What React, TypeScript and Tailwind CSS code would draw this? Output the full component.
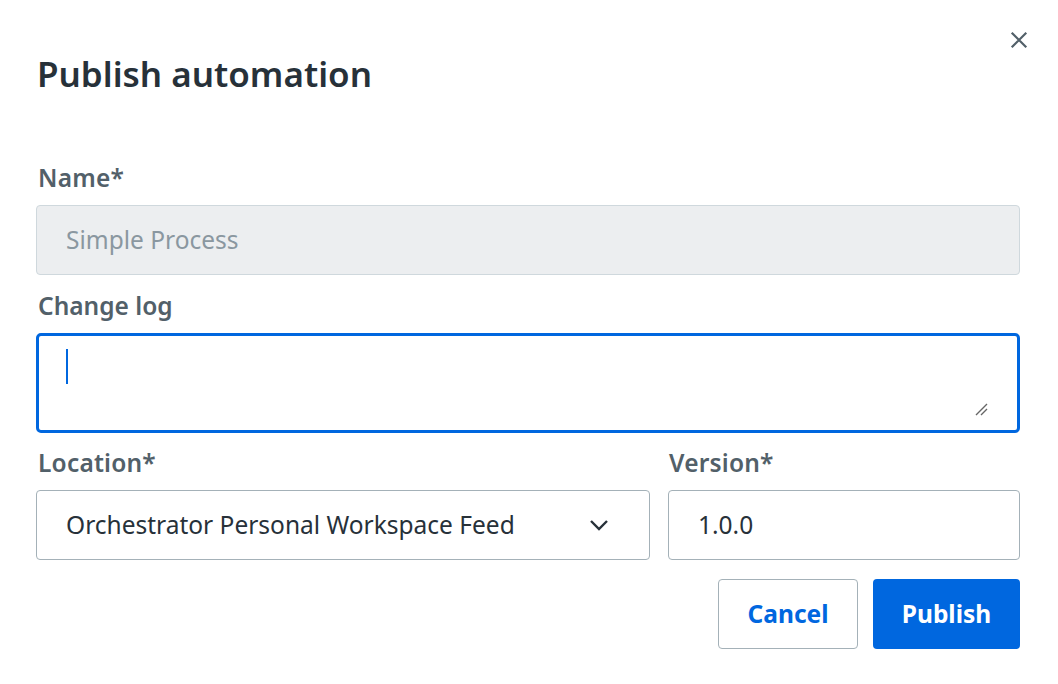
import React from "react";

export default function App() {
  return (
    <div className="w-[1058px] h-[684px] bg-white relative" style={{ fontFamily: '"Noto Sans", sans-serif' }}>
      <button className="absolute right-[29px] top-[30px] w-[20px] h-[20px] flex items-center justify-center text-[#526069]">
        <svg width="18" height="18" viewBox="0 0 18 18" fill="none">
          <path d="M2.5 2.5 L15.5 15.5 M15.5 2.5 L2.5 15.5" stroke="#526069" strokeWidth="2.2" strokeLinecap="square" />
        </svg>
      </button>
      <div className="pl-[36px] pr-[38px] pt-[52px]">
        <h1 className="text-[35px] leading-[44px] font-semibold text-[#273139] pl-[1px]">Publish automation</h1>
        <div className="mt-[66px] text-[24.5px] leading-[32px] font-semibold tracking-[0.2px] text-[#526069] pl-[2px]">Name*</div>
        <div className="mt-[11px] h-[70px] rounded-[4px] border border-[#cfd8dd] bg-[#eceef0] flex items-center px-[29px] text-[24.5px] text-[#8a97a0]">
          Simple Process
        </div>
        <div className="mt-[15px] text-[24.5px] leading-[32px] font-semibold text-[#526069] pl-[2px]">Change log</div>
        <div className="mt-[11px] h-[100px] rounded-[5px] border-[3px] border-[#0067df] relative">
          <div className="absolute left-[27px] top-[13px] w-[2px] h-[35px] bg-[#0067df]" />
          <svg className="absolute right-[28px] bottom-[14px]" width="14" height="14" viewBox="0 0 14 14">
            <path d="M1 13 L12 2 M6 13 L12 7" stroke="#666" strokeWidth="1.4" />
          </svg>
        </div>
        <div className="mt-[14px] flex gap-[18px]">
          <div className="w-[614px]">
            <div className="text-[24.5px] leading-[32px] font-semibold tracking-[0.2px] text-[#526069] pl-[2px]">Location*</div>
            <div className="mt-[11px] h-[70px] rounded-[4px] border border-[#a4b1b8] flex items-center justify-between pl-[29px] pr-[40px] text-[24.5px] text-[#273139]">
              <span>Orchestrator Personal Workspace Feed</span>
              <svg width="20" height="12" viewBox="0 0 20 12" fill="none">
                <path d="M2 2 L10 10 L18 2" stroke="#273139" strokeWidth="2.4" />
              </svg>
            </div>
          </div>
          <div className="flex-1">
            <div className="text-[24.5px] leading-[32px] font-semibold tracking-[0.2px] text-[#526069] pl-[1px]">Version*</div>
            <div className="mt-[11px] h-[70px] rounded-[4px] border border-[#a4b1b8] flex items-center pl-[29px] text-[24.5px] text-[#273139]">
              1.0.0
            </div>
          </div>
        </div>
        <div className="mt-[19px] flex justify-end gap-[15px]">
          <button className="w-[140px] h-[70px] rounded-[4px] border border-[#a4b1b8] bg-white text-[#0067df] text-[24.5px] font-bold">Cancel</button>
          <button className="w-[147px] h-[70px] rounded-[4px] bg-[#0067df] text-white text-[24.5px] font-bold">Publish</button>
        </div>
      </div>
    </div>
  );
}
